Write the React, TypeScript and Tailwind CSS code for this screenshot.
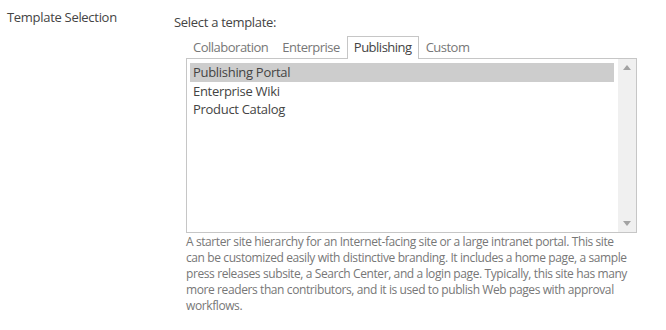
import React from 'react';

const tabs = ['Collaboration', 'Enterprise', 'Publishing', 'Custom'];
const items = ['Publishing Portal', 'Enterprise Wiki', 'Product Catalog'];

const description = [
  'A starter site hierarchy for an Internet-facing site or a large intranet portal. This site',
  'can be customized easily with distinctive branding. It includes a home page, a sample',
  'press releases subsite, a Search Center, and a login page. Typically, this site has many',
  'more readers than contributors, and it is used to publish Web pages with approval',
  'workflows.',
];

function App() {
  const active = 'Publishing';
  const selected = 'Publishing Portal';

  return (
    <div
      className="w-[666px] h-[330px] bg-white flex text-[13px] text-[#444444]"
      style={{ fontFamily: '"Open Sans", "Noto Sans", sans-serif' }}
    >
      {/* Label column */}
      <div className="w-[174px] pl-[7px] pt-[7px] leading-[20px] tracking-[-0.3px]">Template Selection</div>

      {/* Control column */}
      <div className="flex flex-col pt-[12px]">
        <div className="leading-[20px] tracking-[-0.3px]">Select a template:</div>

        <div className="ml-[12px] mt-[5px] w-[451px]">
          {/* Tabs */}
          <div className="relative z-10 flex h-[21px] items-end">
            {tabs.map(t =>
              t === active ? (
                <div
                  key={t}
                  className="h-[23px] -mb-[1px] px-[6px] border border-b-0 border-[#c6c6c6] bg-white leading-[20px] text-[#444444] tracking-[-0.5px]"
                >
                  {t}
                </div>
              ) : (
                <div key={t} className="h-[21px] px-[7px] leading-[20px] text-[#777777] tracking-[-0.5px]">
                  {t}
                </div>
              )
            )}
          </div>

          {/* Listbox */}
          <div className="h-[175px] border border-[#c6c6c6] flex">
            <div className="flex-1 pt-[4px] pl-[3px] pr-[4px]">
              {items.map(i => (
                <div
                  key={i}
                  className={`h-[18.5px] leading-[18px] pl-[3px] tracking-[-0.3px] ${i === selected ? 'bg-[#cdcdcd]' : ''}`}
                >
                  {i}
                </div>
              ))}
            </div>
            <div className="w-[18px] bg-[#f0f0f0] flex flex-col justify-between items-center py-[6px]">
              <svg width="8" height="5" viewBox="0 0 8 5">
                <path d="M0 5 L4 0 L8 5 Z" fill="#a3a3a3" />
              </svg>
              <svg width="8" height="5" viewBox="0 0 8 5">
                <path d="M0 0 L4 5 L8 0 Z" fill="#a3a3a3" />
              </svg>
            </div>
          </div>

          {/* Description */}
          <div className="mt-[1px] w-[470px] text-[12px] leading-[16px] text-[#777777] tracking-[-0.4px]">
            {description.map(line => (
              <div key={line} className="whitespace-nowrap">
                {line}
              </div>
            ))}
          </div>
        </div>
      </div>
    </div>
  );
}

export default App;
